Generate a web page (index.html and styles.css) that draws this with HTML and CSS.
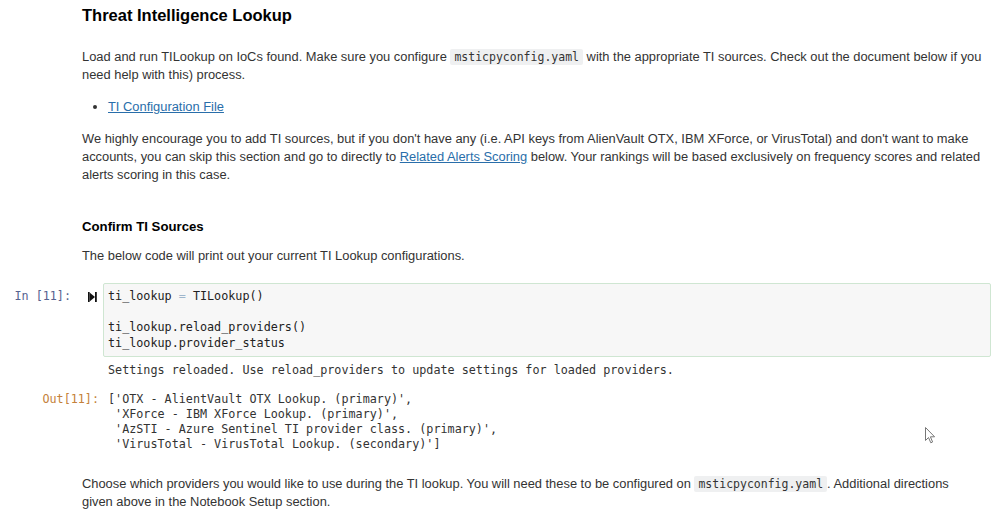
FILE: index.html
```html
<!DOCTYPE html>
<html>
<head>
<meta charset="utf-8">
<link rel="stylesheet" href="styles.css">
</head>
<body>
<div class="notebook">
  <div class="md">
    <h3 class="h3">Threat Intelligence Lookup</h3>
    <p class="p p1">Load and run TILookup on IoCs found. Make sure you configure <code class="ic">msticpyconfig.yaml</code> with the appropriate TI sources. Check out the document below if you need help with this) process.</p>
    <ul class="list"><li><a class="link" href="#">TI Configuration File</a></li></ul>
    <p class="p p3">We highly encourage you to add TI sources, but if you don't have any (i.e. API keys from AlienVault OTX, IBM XForce, or VirusTotal) and don't want to make accounts, you can skip this section and go to directly to <a class="link" href="#">Related Alerts Scoring</a> below. Your rankings will be based exclusively on frequency scores and related alerts scoring in this case.</p>
    <h4 class="h4">Confirm TI Sources</h4>
    <p class="p p4">The below code will print out your current TI Lookup configurations.</p>
  </div>

  <div class="cell">
    <div class="in-prompt">In [11]:</div>
    <div class="run">
      <svg width="9" height="10" viewBox="0 0 9 10"><rect x="0" y="0" width="1.6" height="10" fill="#111"/><polygon points="1.6,0.5 7,5 1.6,9.5" fill="#111"/><rect x="7" y="0" width="1.8" height="10" fill="#111"/></svg>
    </div>
    <div class="input"><pre class="code">ti_lookup <span class="op">=</span> TILookup()

ti_lookup.reload_providers()
ti_lookup.provider_status</pre></div>
  </div>

  <div class="outrow stream">
    <div class="out-prompt"></div>
    <pre class="out">Settings reloaded. Use reload_providers to update settings for loaded providers.</pre>
  </div>

  <div class="outrow result">
    <div class="out-prompt">Out[11]:</div>
    <pre class="out">['OTX - AlientVault OTX Lookup. (primary)',
 'XForce - IBM XForce Lookup. (primary)',
 'AzSTI - Azure Sentinel TI provider class. (primary)',
 'VirusTotal - VirusTotal Lookup. (secondary)']</pre>
  </div>

  <div class="md">
    <p class="p p5">Choose which providers you would like to use during the TI lookup. You will need these to be configured on <code class="ic">msticpyconfig.yaml</code>. Additional directions<br>given above in the Notebook Setup section.</p>
  </div>
</div>
<svg class="cursor" width="12" height="18" viewBox="0 0 12 18"><path d="M0.5 0.5 L0.5 13.5 L3.5 10.5 L5.8 15.8 L7.6 15 L5.4 9.8 L9.6 9.8 Z" fill="#fff" stroke="#777" stroke-width="1"/></svg>
</body>
</html>
```
FILE: styles.css
```css
html, body {
  margin: 0;
  padding: 0;
  background: #fff;
}
body {
  font-family: "Liberation Sans", Arial, sans-serif;
  font-size: 12.88px;
  color: #333;
  width: 999px;
  height: 515px;
  overflow: hidden;
  position: relative;
}
.notebook {
  padding-top: 5px;
}
.md {
  padding-left: 82px;
  padding-right: 14.5px;
}
.h3 {
  font-size: 16.5px;
  line-height: 20px;
  font-weight: bold;
  color: #000;
  margin: 0;
}
.p {
  margin: 0;
  line-height: 18px;
}
.p1 { margin-top: 23px; }
.list {
  margin: 14px 0 0 0;
  padding-left: 26px;
  line-height: 18px;
}
.p3 { margin-top: 14px; }
.h4 {
  margin: 34px 0 0 0;
  font-size: 13.2px;
  line-height: 18px;
  font-weight: bold;
  color: #000;
}
.p4 { margin-top: 11px; }
.link {
  color: #296eaa;
  text-decoration: underline;
}
.ic {
  font-family: "DejaVu Sans Mono", monospace;
  font-size: 11.5px;
  background: #eff0f1;
  padding: 1px 4px;
  border-radius: 2px;
  color: #333;
}
.cell {
  display: flex;
  margin-top: 18px;
  margin-right: 8px;
}
.in-prompt {
  width: 71px;
  text-align: right;
  font-family: "DejaVu Sans Mono", monospace;
  font-size: 11.75px;
  color: #56628f;
  padding-top: 6px;
  line-height: 15.5px;
}
.run {
  width: 32px;
  display: flex;
  justify-content: flex-start;
  padding-left: 17px;
  box-sizing: border-box;
  padding-top: 9px;
}
.input {
  flex: 1;
  border: 1px solid #cfe6d2;
  background: #f7f7f7;
  border-radius: 2px;
  padding: 5px 4px;
}
.code, .out {
  margin: 0;
  font-family: "DejaVu Sans Mono", monospace;
  font-size: 11.75px;
  line-height: 15.5px;
  color: #222;
}
.op { color: #9fb6cc; }
.outrow {
  display: flex;
}
.stream { margin-top: 6px; }
.result { margin-top: 14px; }
.out-prompt {
  width: 99px;
  text-align: right;
  font-family: "DejaVu Sans Mono", monospace;
  font-size: 11.75px;
  line-height: 15px;
  color: #c4813b;
  padding-right: 9px;
}
.out {
  line-height: 15px;
  color: #333;
}
.p5 { margin-top: 23px; }
.cursor {
  position: absolute;
  left: 925px;
  top: 427px;
}
```
